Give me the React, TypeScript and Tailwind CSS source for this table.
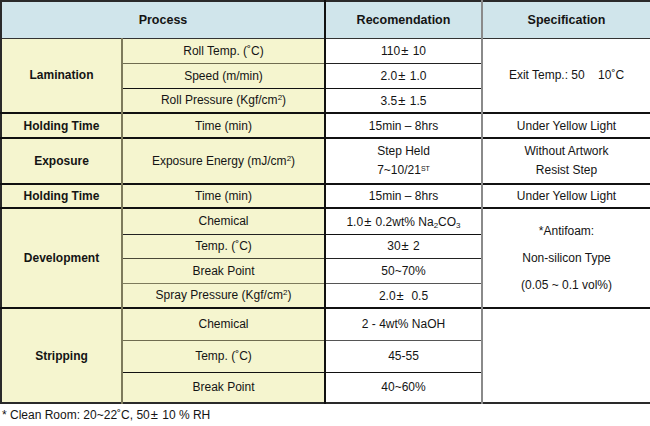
const font = { fontFamily: '"Liberation Sans", Arial, sans-serif' };

function PM({ a, b }: { a: string; b: string }) {
  return (
    <>
      {a}
      <span className="ml-[1px] mr-[1px] text-[13px]">±</span> {b}
    </>
  );
}

const proc = "bg-[#f5f5cf] text-center border-l-2 border-l-[#7d7a5c]";
const bold = "bg-[#f5f5cf] text-center font-bold";
const rec = "text-center border-l-2 border-l-[#111]";
const spec = "text-center border-l-2 border-l-[#8a8a8a]";
const thick = "border-t-2 border-t-[#111]";

export default function App() {
  return (
    <div className="w-[650px] h-[426px] bg-white text-[12px] text-[#141414]" style={font}>
      <table className="w-[650px] table-fixed border-collapse border-2 border-[#2a2a2a]">
        <colgroup>
          <col className="w-[121px]" />
          <col className="w-[203px]" />
          <col className="w-[157px]" />
          <col className="w-[169px]" />
        </colgroup>
        <tbody>
          <tr className="h-[37px] bg-[#d0e5eb] font-bold text-[12.5px]">
            <td colSpan={2} className="text-center pt-[2px]">Process</td>
            <td className="text-center pt-[2px] border-l-2 border-l-[#111]">Recomendation</td>
            <td className="text-center pt-[2px] border-l-2 border-l-[#8a8a8a]">Specification</td>
          </tr>

          {/* Lamination */}
          <tr className="h-[25px] border-t border-t-[#333]">
            <td rowSpan={3} className={bold}>Lamination</td>
            <td className={proc}>Roll Temp. (˚C)</td>
            <td className={rec}><PM a="110" b="10" /></td>
            <td rowSpan={3} className={spec}>Exit Temp.: 50&nbsp;&nbsp;&nbsp;&nbsp;10˚C</td>
          </tr>
          <tr className="h-[25px]">
            <td className={`${proc} border-t border-t-[#6f6c50]`}>Speed (m/min)</td>
            <td className={`${rec} border-t border-t-[#222]`}><PM a="2.0" b="1.0" /></td>
          </tr>
          <tr className="h-[25px]">
            <td className={`${proc} border-t border-t-[#111]`}>Roll Pressure (Kgf/cm<sup className="text-[8px]">2</sup>)</td>
            <td className={`${rec} border-t border-t-[#111]`}><PM a="3.5" b="1.5" /></td>
          </tr>

          {/* Holding */}
          <tr className={`h-[25px] ${thick}`}>
            <td className={bold}>Holding Time</td>
            <td className={proc}>Time (min)</td>
            <td className={rec}>15min – 8hrs</td>
            <td className={spec}>Under Yellow Light</td>
          </tr>

          {/* Exposure */}
          <tr className={`h-[46px] ${thick}`}>
            <td className={bold}>Exposure</td>
            <td className={proc}>Exposure Energy (mJ/cm<sup className="text-[8px]">2</sup>)</td>
            <td className={`${rec} leading-[19px]`}>
              Step Held
              <br />
              7~10/21<sup className="text-[7px]">ST</sup>
            </td>
            <td className={`${spec} leading-[19px]`}>
              Without Artwork
              <br />
              Resist Step
            </td>
          </tr>

          {/* Holding */}
          <tr className={`h-[24px] ${thick}`}>
            <td className={bold}>Holding Time</td>
            <td className={proc}>Time (min)</td>
            <td className={rec}>15min – 8hrs</td>
            <td className={spec}>Under Yellow Light</td>
          </tr>

          {/* Development */}
          <tr className={`h-[26px] ${thick}`}>
            <td rowSpan={4} className={bold}>Development</td>
            <td className={proc}>Chemical</td>
            <td className={rec}>
              <PM a="1.0" b="0.2wt% Na" />
              <sub className="text-[8px]">2</sub>CO<sub className="text-[8px]">3</sub>
            </td>
            <td rowSpan={4} className={`${spec} leading-[27px]`}>
              *Antifoam:
              <br />
              Non-silicon Type
              <br />
              (0.05 ~ 0.1 vol%)
            </td>
          </tr>
          <tr className="h-[24px]">
            <td className={`${proc} border-t border-t-[#222]`}>Temp. (˚C)</td>
            <td className={`${rec} border-t border-t-[#111]`}><PM a="30" b="2" /></td>
          </tr>
          <tr className="h-[25px]">
            <td className={`${proc} border-t border-t-[#4a4838]`}>Break Point</td>
            <td className={`${rec} border-t border-t-[#222]`}>50~70%</td>
          </tr>
          <tr className="h-[25px]">
            <td className={`${proc} border-t border-t-[#7d7a5c]`}>Spray Pressure (Kgf/cm<sup className="text-[8px]">2</sup>)</td>
            <td className={`${rec} border-t border-t-[#555]`}>
              2.0<span className="ml-[1px] mr-[1px] text-[13px]">±</span>&nbsp; 0.5
            </td>
          </tr>

          {/* Stripping */}
          <tr className={`h-[32px] ${thick}`}>
            <td rowSpan={3} className={bold}>Stripping</td>
            <td className={proc}>Chemical</td>
            <td className={rec}>2 - 4wt% NaOH</td>
            <td rowSpan={3} className={spec}></td>
          </tr>
          <tr className="h-[32px]">
            <td className={`${proc} border-t border-t-[#6f6c50]`}>Temp. (˚C)</td>
            <td className={`${rec} border-t border-t-[#555]`}>45-55</td>
          </tr>
          <tr className="h-[31px]">
            <td className={`${proc} border-t border-t-[#111]`}>Break Point</td>
            <td className={`${rec} border-t border-t-[#111]`}>40~60%</td>
          </tr>
        </tbody>
      </table>
      <div className="pl-[2px] pt-[4px] leading-[14px]">
        * Clean Room: 20~22˚C, 50<span className="ml-[1px] mr-[1px] text-[13px]">±</span> 10 % RH
      </div>
    </div>
  );
}
